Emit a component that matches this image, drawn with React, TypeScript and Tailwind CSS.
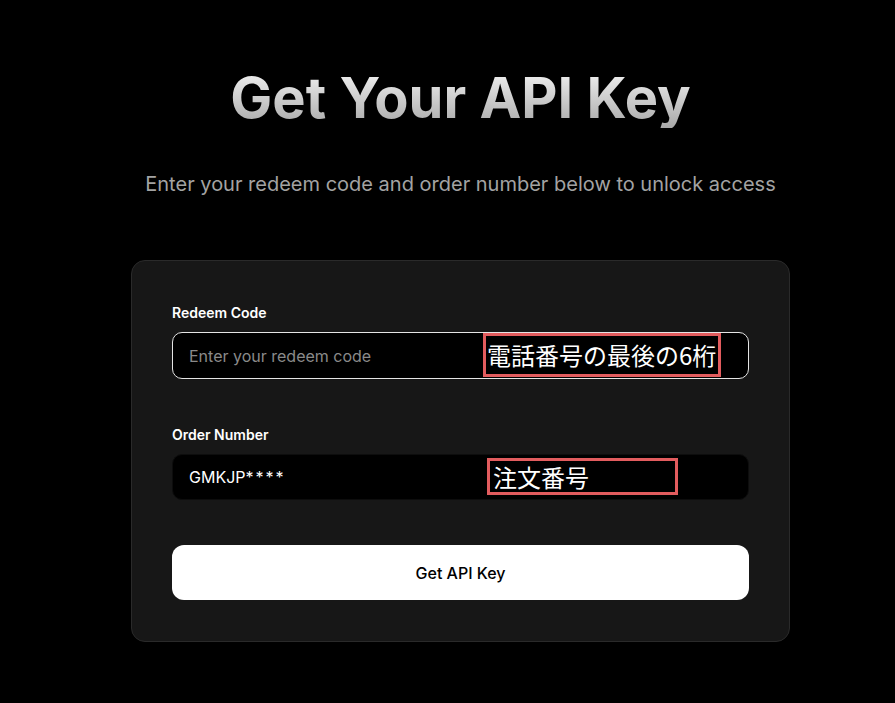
import React from "react";

export default function App() {
  return (
    <div
      className="min-h-[703px] w-full bg-black pl-[26px] pt-[68px]"
      style={{ fontFamily: "Inter, 'Noto Sans CJK JP', sans-serif" }}
    >
      <div className="flex flex-col items-center">
        <h1 className="bg-gradient-to-b from-[#f5f5f5] to-[#a8a8a8] bg-clip-text text-[56px] font-bold leading-[60px] text-transparent">
          Get Your API Key
        </h1>
        <p className="mt-[42px] text-[20px] leading-7 text-[#a3a3a3]">
          Enter your redeem code and order number below to unlock access
        </p>

        <div className="mt-[62px] w-[659px] rounded-[14px] border border-[#2a2a2a] bg-[#171717] px-[40px] pb-[41px] pt-[42px]">
          <label className="mb-[9px] block text-sm font-semibold leading-5 text-white">
            Redeem Code
          </label>
          <div className="relative">
            <div className="flex h-[47px] items-center rounded-[10px] border border-[#e5e5e5] bg-black px-4 text-base text-[#8a8a8a]">
              Enter your redeem code
            </div>
            <div
              className="absolute left-[311px] top-[1px] flex h-[44px] w-[238px] items-center border-[3px] border-[#e25c5e] bg-black pl-[1px] text-[24px] leading-none text-white"
              style={{ fontFamily: "'Noto Sans CJK JP', sans-serif" }}
            >
              電話番号の最後の6桁
            </div>
          </div>

          <label className="mb-[9px] mt-[46px] block text-sm font-semibold leading-5 text-white">
            Order Number
          </label>
          <div className="relative">
            <div className="flex h-[46px] items-center rounded-[10px] border border-[#0d0d0d] bg-black px-4 text-base text-white">
              GMKJP<span className="tracking-[2px]">****</span>
            </div>
            <div
              className="absolute left-[315px] top-[4px] flex h-[37px] w-[191px] items-center border-[3px] border-[#e25c5e] bg-black pl-[3px] text-[24px] leading-none text-white"
              style={{ fontFamily: "'Noto Sans CJK JP', sans-serif" }}
            >
              注文番号
            </div>
          </div>

          <button className="mt-[45px] flex h-[55px] w-full items-center justify-center rounded-[12px] bg-white text-[16px] font-medium text-black">
            Get API Key
          </button>
        </div>
      </div>
    </div>
  );
}
